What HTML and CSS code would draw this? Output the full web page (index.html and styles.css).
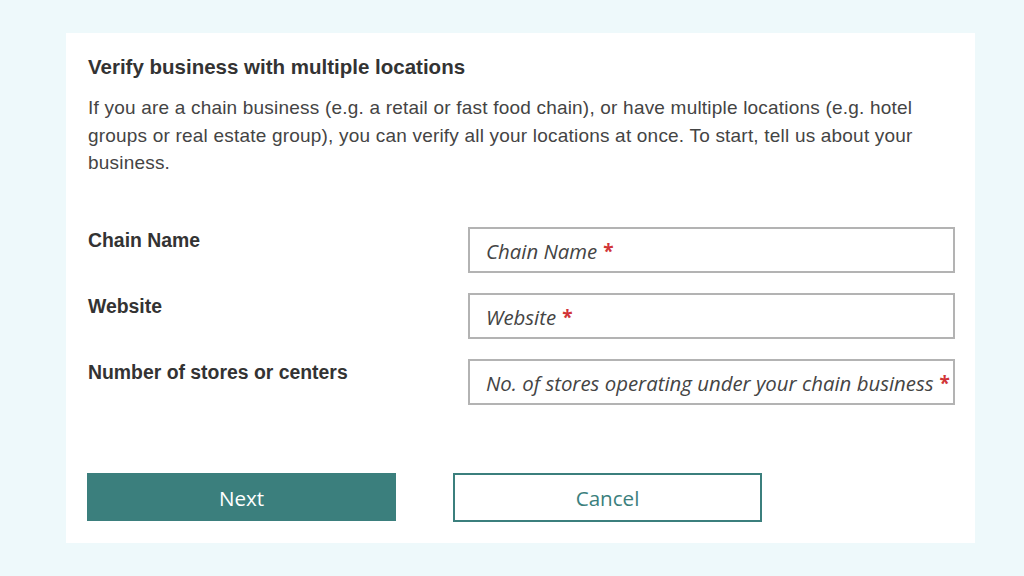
FILE: index.html
```html
<!DOCTYPE html>
<html>
<head>
	<link rel="stylesheet" href="styles.css">
</head>
<body>
    <div class="card">
        <h2 class="title">Verify business with multiple locations</h2>
        <p class="intro">If you are a chain business (e.g. a retail or fast food chain), or have multiple locations (e.g. hotel groups or real estate group), you can verify all your locations at once. To start, tell us about your business.</p>

        <div class="form">
            <div class="label">Chain Name</div>
            <div class="field"><span>Chain Name</span> <span class="req">*</span></div>

            <div class="label">Website</div>
            <div class="field"><span>Website</span> <span class="req">*</span></div>

            <div class="label">Number of stores or centers</div>
            <div class="field"><span>No. of stores operating under your chain business</span> <span class="req">*</span></div>
        </div>

        <div class="actions">
            <a href="#" class="btn btn_primary">Next</a>
            <a href="#" class="btn btn_outline">Cancel</a>
        </div>
    </div>
</body>
</html>
```

FILE: styles.css
```css
body {
    margin: 0;
    background-color: #eef9fb;
    font-family: "Liberation Sans", Arial, sans-serif;
    color: #444;
}
a { text-decoration: none; }

.card {
    margin: 33px 0 0 66px;
    width: 909px;
    height: 510px;
    box-sizing: border-box;
    padding: 22px 22px 0 22px;
    background-color: #fff;
}
.title {
    margin: 0;
    font-size: 20.5px;
    line-height: 24px;
    font-weight: bold;
    color: #333;
}
.intro {
    margin: 15px 0 0 0;
    font-size: 19px;
    line-height: 27.5px;
    letter-spacing: 0.2px;
    width: 860px;
}

.form {
    margin-top: 50px;
    display: grid;
    grid-template-columns: 380px 487px;
    row-gap: 20px;
}
.label {
    padding-top: 2px;
    font-size: 19.4px;
    line-height: 22px;
    font-weight: bold;
    color: #333;
}
.field {
    height: 46px;
    box-sizing: border-box;
    border: 2px solid #b3b3b3;
    padding: 3px 16px 0 16px;
    display: flex;
    align-items: center;
    gap: 6px;
    font-family: "Open Sans", sans-serif;
    font-style: italic;
    font-size: 20.4px;
    color: #444;
    white-space: nowrap;
}
.req {
    color: #d13438;
    font-style: normal;
    font-weight: bold;
    font-size: 19px;
}

.actions {
    margin-top: 68px;
    display: flex;
    gap: 57px;
}
.btn {
    width: 309px;
    height: 48px;
    box-sizing: border-box;
    padding-top: 2px;
    display: flex;
    align-items: center;
    justify-content: center;
    font-family: "Open Sans", sans-serif;
    font-size: 20.6px;
}
.btn_primary {
    background-color: #3b7f7d;
    color: #fff;
    margin-left: -1px;
}
.btn_outline {
    border: 2px solid #3b7f7d;
    color: #3b7f7d;
    background-color: #fff;
    height: 49px;
}
```
